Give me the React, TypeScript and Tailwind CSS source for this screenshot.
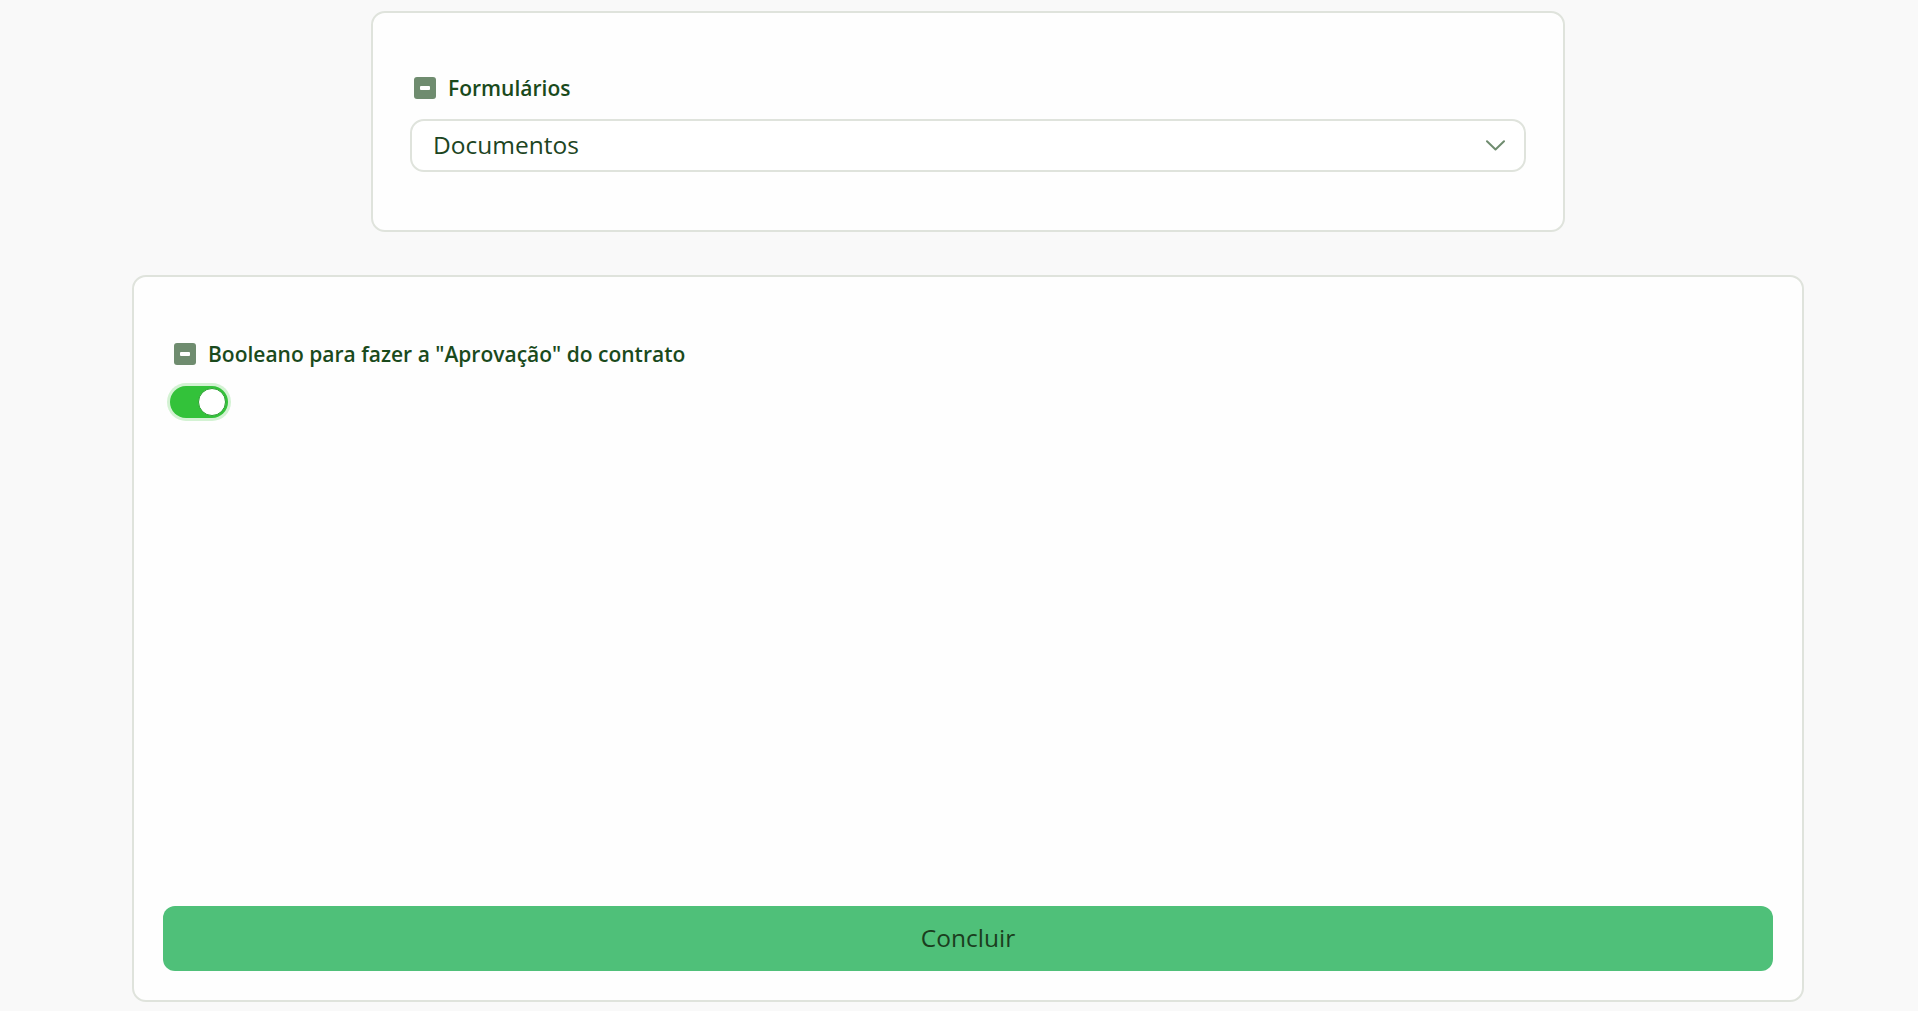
import React from "react";

const MinusIcon = () => (
    <span className="flex h-[22px] w-[22px] shrink-0 items-center justify-center rounded-[3px] bg-[#6f8c6f]">
        <span className="h-[4px] w-[10px] rounded-[1px] bg-white" />
    </span>
);

const FieldLabel = ({ text }: { text: string }) => (
    <div className="ml-[4px] flex h-[26px] items-center gap-[12px]">
        <MinusIcon />
        <span className="text-[21px] font-semibold leading-none text-[#1a4a1c]">{text}</span>
    </div>
);

const App = () => {
    return (
        <div
            className="min-h-screen bg-[#f9f9f9] pt-[11px] pl-[18px]"
            style={{ fontFamily: '"Open Sans", "Noto Sans", sans-serif' }}
        >
            <div className="flex flex-col items-center">
                <section className="w-[1194px] rounded-[14px] border-2 border-[#dfe3dc] bg-[#fefefe] px-[37px] pt-[62px] pb-[58px]">
                    <FieldLabel text="Formulários" />
                    <button className="mt-[18px] flex h-[53px] w-full items-center justify-between rounded-[14px] border-2 border-[#dfe3dc] bg-white pl-[21px] pr-[19px]">
                        <span className="text-[24.5px] leading-none text-[#1d451f]">Documentos</span>
                        <svg width="19" height="11" viewBox="0 0 19 11" fill="none">
                            <path d="M1 1.2 9.5 9.5 18 1.2" stroke="#6f8c6f" strokeWidth="2" strokeLinecap="round" strokeLinejoin="round" />
                        </svg>
                    </button>
                </section>

                <section className="mt-[43px] flex h-[727px] w-[1672px] flex-col rounded-[14px] border-2 border-[#dfe3dc] bg-[#fefefe] px-[29px] pt-[64px] pb-[29px]">
                    <div className="flex-1 pl-[7px]">
                        <FieldLabel text={'Booleano para fazer a "Aprovação" do contrato'} />
                        <div className="mt-[19px] flex h-[32px] w-[58px] items-center justify-end rounded-full bg-[#33c23a] p-[2px] ring-[3px] ring-[#d3f2d3]">
                            <span className="h-[28px] w-[28px] rounded-full border border-[#2a9f30] bg-white" />
                        </div>
                    </div>
                    <button className="flex h-[65px] w-full items-center justify-center rounded-[12px] bg-[#4fc079] text-[24.5px] text-[#1b3d1e]">
                        Concluir
                    </button>
                </section>
            </div>
        </div>
    );
};

export default App;
